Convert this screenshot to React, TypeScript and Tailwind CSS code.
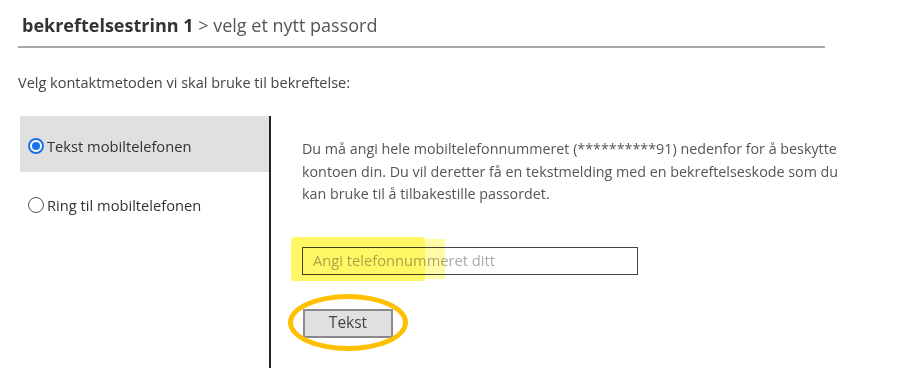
import React from 'react';

const font = { fontFamily: '"Open Sans", "Noto Sans", sans-serif' };

const Radio = ({ checked }: { checked?: boolean }) => (
    <span
        className={
            checked
                ? 'w-[16px] h-[16px] rounded-full border-2 border-[#1a73e8] bg-white flex items-center justify-center shrink-0'
                : 'w-[16px] h-[16px] rounded-full border-[1.5px] border-[#555] bg-white shrink-0'
        }
    >
        {checked && <span className="w-[8px] h-[8px] rounded-full bg-[#1a73e8]"></span>}
    </span>
);

export default function App() {
    return (
        <div className="w-[900px] h-[380px] bg-white relative overflow-hidden text-[#333]" style={font}>
            {/* Header */}
            <div className="pl-[22px] pt-[12px] text-[18px] leading-[26px] text-[#444]">
                <span className="font-bold text-[#333]">bekreftelsestrinn 1</span>
                <span className="text-[#555]"> &gt; velg et nytt passord</span>
            </div>
            <div className="ml-[18px] mt-[8px] w-[807px] h-[2px] bg-[#a8a8a8]"></div>

            <div className="pl-[18px] mt-[26px] text-[14.5px] leading-[18px] text-[#444]">
                Velg kontaktmetoden vi skal bruke til bekreftelse:
            </div>

            {/* Body */}
            <div className="flex mt-[24px] h-[252px]">
                <div className="ml-[20px] w-[251px] border-r-2 border-[#222] flex flex-col">
                    <div className="h-[56px] bg-[#e0e0e0] flex items-center gap-[3px] pl-[8px] pt-[4px] text-[14.7px] text-[#333]">
                        <Radio checked />
                        <span>Tekst mobiltelefonen</span>
                    </div>
                    <div className="h-[66px] flex items-center gap-[3px] pl-[8px] text-[14.7px] text-[#333]">
                        <Radio />
                        <span>Ring til mobiltelefonen</span>
                    </div>
                </div>

                <div className="pl-[31px] pt-[22px] flex flex-col">
                    <p className="w-[552px] text-[14.3px] leading-[22.5px] text-[#555]">
                        Du må angi hele mobiltelefonnummeret (**********91) nedenfor for å beskytte kontoen din. Du vil deretter få en tekstmelding med en bekreftelseskode som du kan bruke til å tilbakestille passordet.
                    </p>
                    <div className="mt-[41px] w-[336px] h-[28px] border-[1.5px] border-[#444] flex items-center pl-[10px] text-[14.7px] text-[#aaa]">
                        Angi telefonnummeret ditt
                    </div>
                    <button className="mt-[34px] ml-[1px] w-[90px] h-[29px] bg-[#e0e0e0] border-2 border-[#8a8a8a] text-[15.5px] text-[#444]">
                        Tekst
                    </button>
                </div>
            </div>

            {/* Annotation: yellow highlight */}
            <div className="absolute left-[291px] top-[237px] w-[134px] h-[44px] bg-[#fff200] opacity-60 mix-blend-multiply rounded-[3px]"></div>
            <div className="absolute left-[425px] top-[239px] w-[20px] h-[40px] bg-[#fff200] opacity-35 mix-blend-multiply"></div>

            {/* Annotation: orange ellipse */}
            <div className="absolute left-[288px] top-[294px] w-[120px] h-[57px] rounded-[50%] border-[5px] border-[#ffc000]"></div>
        </div>
    );
}
